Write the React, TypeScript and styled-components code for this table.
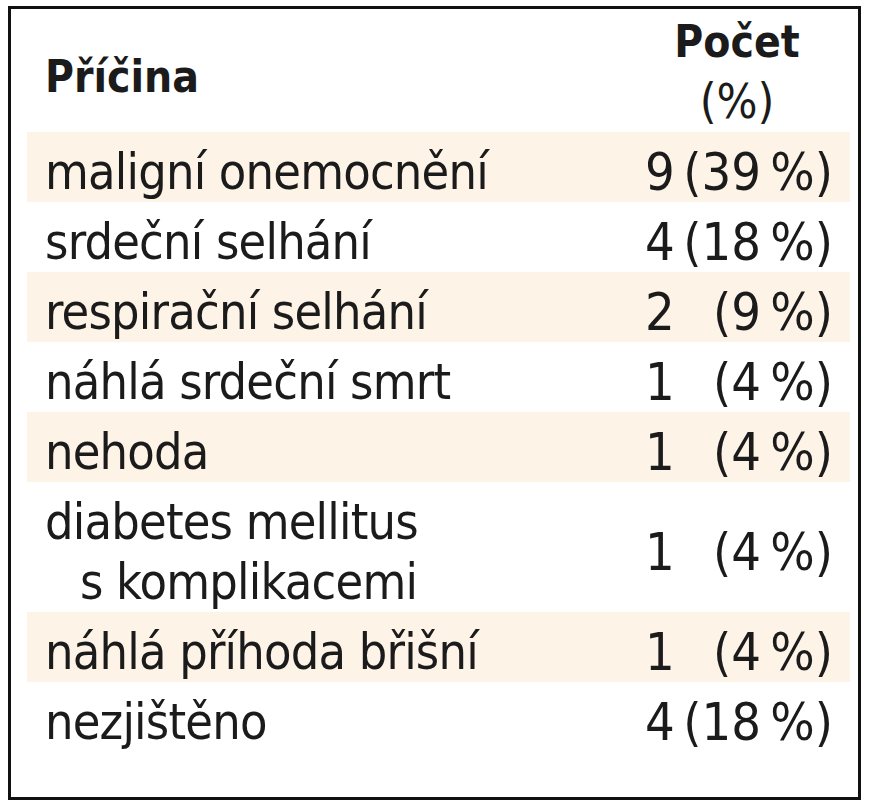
import React from "react";
import styled, { createGlobalStyle } from "styled-components";

const Global = createGlobalStyle`
  html, body { margin: 0; padding: 0; background: #ffffff; }
  body { font-family: "DejaVu Sans Condensed", "Liberation Sans Narrow", "Liberation Sans", sans-serif; color: #1b1b1b; }
`;

const Frame = styled.div`
  box-sizing: border-box;
  width: 853px;
  height: 794px;
  margin: 6px 0 0 8px;
  border: 3px solid #111;
  padding: 0 8px 0 16px;
`;

const Table = styled.table`
  width: 100%;
  border-collapse: collapse;
  border-spacing: 0;
  font-size: 50px;
  letter-spacing: -0.8px;
  line-height: 60px;
`;

const HeadRow = styled.tr`
  height: 123px;
`;

const HeadCell = styled.th<{ $align: "left" | "center" }>`
  font-weight: 700;
  font-size: 44px;
  letter-spacing: 0;
  text-align: ${(p) => p.$align};
  vertical-align: top;
  padding: ${(p) => (p.$align === "left" ? "38px 0 0 18px" : "4px 21px 0 0")};
  line-height: ${(p) => (p.$align === "left" ? "60px" : "58px")};
`;

const HeadSub = styled.div`
  font-weight: 400;
  font-size: 48px;
  line-height: 60px;
`;

const Row = styled.tr<{ $shaded?: boolean }>`
  background: ${(p) => (p.$shaded ? "#fdf3e7" : "transparent")};
`;

const CauseCell = styled.td`
  padding: 10px 0 0 18px;
  vertical-align: top;
`;

const Line = styled.div<{ $indent?: boolean }>`
  padding-left: ${(p) => (p.$indent ? "35px" : "0")};
`;

const ValueCell = styled.td`
  width: 188px;
  padding: 10px 17px 0 0;
  vertical-align: middle;
`;

const Value = styled.div`
  display: flex;
  justify-content: space-between;
  font-size: 52px;
  letter-spacing: 0;
`;

const Count = styled.span``;

const Pct = styled.span``;

type Item = { cause: string[]; count: number; pct: string; shaded: boolean };

const items: Item[] = [
  { cause: ["maligní onemocnění"], count: 9, pct: "(39\u2009%)", shaded: true },
  { cause: ["srdeční selhání"], count: 4, pct: "(18\u2009%)", shaded: false },
  { cause: ["respirační selhání"], count: 2, pct: "(9\u2009%)", shaded: true },
  { cause: ["náhlá srdeční smrt"], count: 1, pct: "(4\u2009%)", shaded: false },
  { cause: ["nehoda"], count: 1, pct: "(4\u2009%)", shaded: true },
  { cause: ["diabetes mellitus", "s komplikacemi"], count: 1, pct: "(4\u2009%)", shaded: false },
  { cause: ["náhlá příhoda břišní"], count: 1, pct: "(4\u2009%)", shaded: true },
  { cause: ["nezjištěno"], count: 4, pct: "(18\u2009%)", shaded: false },
];

export default function App() {
  return (
    <>
      <Global />
      <Frame>
        <Table>
          <thead>
            <HeadRow>
              <HeadCell $align="left">Příčina</HeadCell>
              <HeadCell $align="center">
                Počet
                <HeadSub>(%)</HeadSub>
              </HeadCell>
            </HeadRow>
          </thead>
          <tbody>
            {items.map((it, i) => (
              <Row key={i} $shaded={it.shaded}>
                <CauseCell>
                  {it.cause.map((c, j) => (
                    <Line key={j} $indent={j > 0}>
                      {c}
                    </Line>
                  ))}
                </CauseCell>
                <ValueCell>
                  <Value>
                    <Count>{it.count}</Count>
                    <Pct>{it.pct}</Pct>
                  </Value>
                </ValueCell>
              </Row>
            ))}
          </tbody>
        </Table>
      </Frame>
    </>
  );
}
